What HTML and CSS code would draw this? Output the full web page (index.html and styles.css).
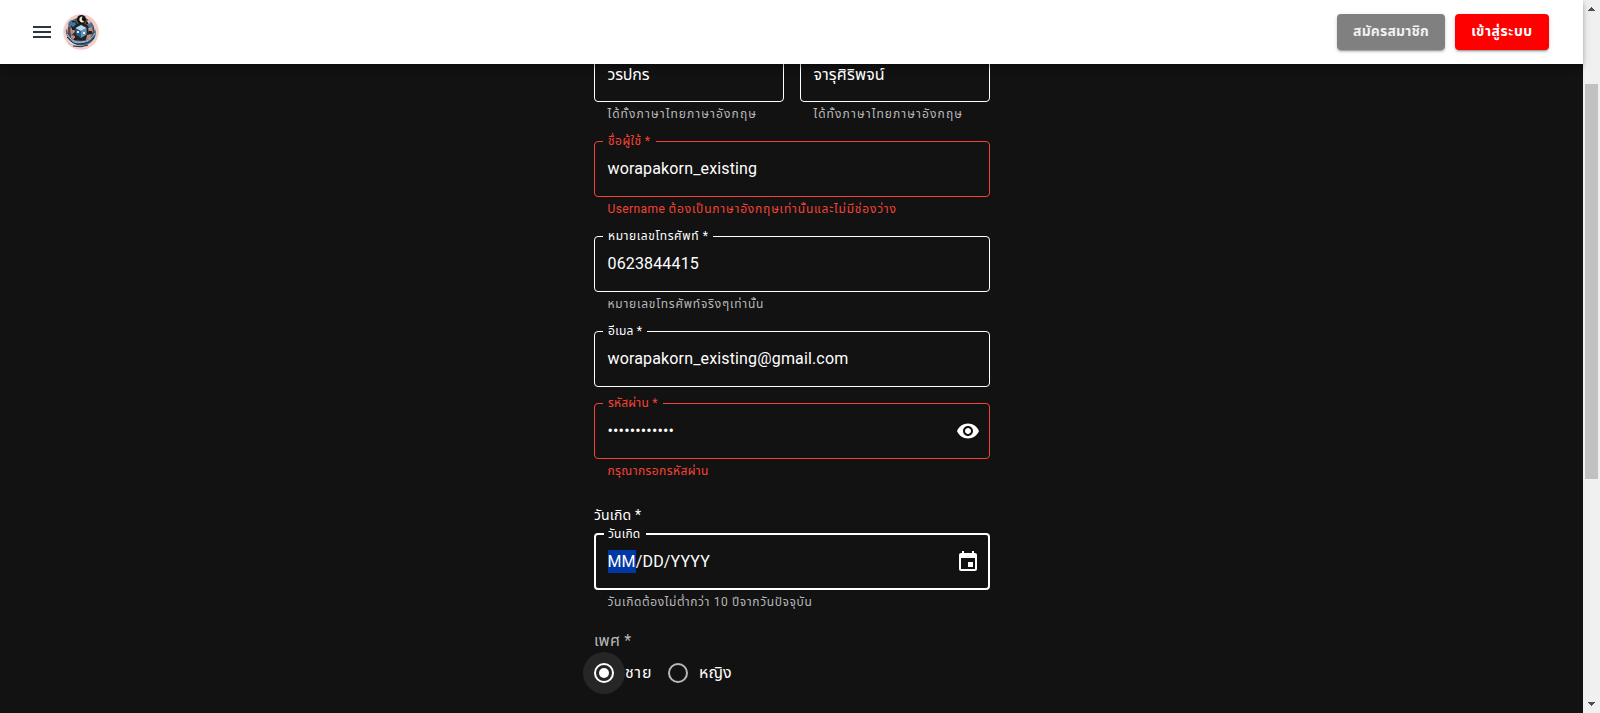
FILE: index.html
```html
<!DOCTYPE html>
<html lang="th">
<head>
<meta charset="utf-8">
<title>สมัครสมาชิก</title>
<link rel="stylesheet" href="styles.css">
</head>
<body>
<div class="page">
  <div class="view">
    <header class="appbar">
      <div class="brand">
        <svg class="menu" viewBox="0 0 24 24"><path d="M3 18h18v-2H3v2zm0-5h18v-2H3v2zm0-7v2h18V6H3z"/></svg>
        <svg class="logo" viewBox="0 0 36 36">
          <circle cx="18" cy="18" r="17.8" fill="#f3cdc8"/>
          <circle cx="18" cy="17" r="13.5" fill="#54474c"/>
          <path d="M5 10q2-5 7-4q5 2 2 6q-4 4-8 1zM22 8q6-2 8 3q1 4-3 4z" fill="#477594"/>
          <path d="M9 8a3 3 0 1 1-1 4" fill="none" stroke="#17232e" stroke-width="1.4"/>
          <path d="M3 14q-1 6 3 11q5 6 12 7q8 0 13-7q3-5 1-10q-2 7-7 10q-7 4-14 1q-6-3-8-12z" fill="#39627f"/>
          <path d="M4 20q5 9 14 8q9 0 14-9M6 26q6 4 12 3q7 0 11-4M5 29q8 5 20 2" fill="none" stroke="#a7c6d8" stroke-width="1"/>
          <path d="M4 23q6 8 13 7q8 0 14-6M10 32q8 2 15-1" fill="none" stroke="#192531" stroke-width="1"/>
          <path d="M10 14q3-5 8-5q6 0 9 6l-2 9q-6 5-14 0z" fill="#241f26"/>
          <path d="M7 15l4-2 1 5-4 3zM25 14l4-1 1 5-4 1zM8 21l4 1v4l-4-2zM24 21l5-1-2 5-4 1z" fill="#bd8b81"/>
          <path d="M9 13h3v3H9zM26 17h3v3h-3zM23 8h2v2h-2zM11 24h3v2h-3z" fill="#201d24"/>
          <circle cx="18.5" cy="5.500" r="4.500" fill="#11120f"/>
          <path d="M19.500 2.500a3 3 0 1 0 2 5q-4-.5-2-5z" fill="#f5ead3"/>
          <path d="M18 11l5.500 3v6.500l-5.500 3.500-5.500-3.500v-6.500z" fill="#285d86"/>
          <path d="M18 11l5.500 3-5.500 3-5.500-3z" fill="#bdd8e6"/>
          <path d="M18 17l5.500-3v6.500l-5.500 3.500z" fill="#6296b8"/>
          <path d="M14 17h2v2h-2zM20 18h2v2h-2z" fill="#e6f1f5"/>
          <path d="M24 7l2-2 2 3-2 2z" fill="#e9b8ae"/>
        </svg>
      </div>
      <div class="actions">
        <button class="btn btn-register"><span>สมัครสมาชิก</span></button>
        <button class="btn btn-login"><span>เข้าสู่ระบบ</span></button>
      </div>
    </header>
    <main class="form">
      <div class="row">
        <div class="item">
          <div class="field"><span class="value t-first">วรปกร</span></div>
          <p class="help t-help-name">ได้ทั้งภาษาไทยภาษาอังกฤษ</p>
        </div>
        <div class="item">
          <div class="field"><span class="value t-last">จารุศิริพจน์</span></div>
          <p class="help t-help-name">ได้ทั้งภาษาไทยภาษาอังกฤษ</p>
        </div>
      </div>
      <div class="item error">
        <div class="field"><label class="label l-user">ชื่อผู้ใช้ *</label><span class="value">worapakorn_existing</span></div>
        <p class="help">Username <span class="t-help-user">ต้องเป็นภาษาอังกฤษเท่านั้นและไม่มีช่องว่าง</span></p>
      </div>
      <div class="item">
        <div class="field"><label class="label l-phone">หมายเลขโทรศัพท์ *</label><span class="value">0623844415</span></div>
        <p class="help t-help-phone">หมายเลขโทรศัพท์จริงๆเท่านั้น</p>
      </div>
      <div class="item">
        <div class="field"><label class="label l-email">อีเมล *</label><span class="value">worapakorn_existing@gmail.com</span></div>
      </div>
      <div class="item error">
        <div class="field"><label class="label l-pass">รหัสผ่าน *</label><span class="value dots">••••••••••••</span>
          <svg class="icon" viewBox="0 0 24 24"><path d="M12 4.5C7 4.5 2.73 7.61 1 12c1.73 4.39 6 7.5 11 7.5s9.27-3.11 11-7.5c-1.73-4.39-6-7.5-11-7.5M12 17c-2.76 0-5-2.24-5-5s2.24-5 5-5 5 2.24 5 5-2.24 5-5 5m0-8c-1.66 0-3 1.34-3 3s1.34 3 3 3 3-1.34 3-3-1.34-3-3-3"/></svg>
        </div>
        <p class="help">กรุณากรอกรหัสผ่าน</p>
      </div>
      <div class="birth">
        <div class="caption"><span class="t-birth">วันเกิด *</span></div>
        <div class="field focused"><label class="label l-birth">วันเกิด</label><span class="value"><span class="sel">MM</span>/DD/YYYY</span>
          <svg class="icon" viewBox="0 0 24 24"><path d="M17 12h-5v5h5v-5zM16 1v2H8V1H6v2H5c-1.11 0-1.99.9-1.99 2L3 19c0 1.1.89 2 2 2h14c1.1 0 2-.9 2-2V5c0-1.1-.9-2-2-2h-1V1h-2zm3 18H5V8h14v11z"/></svg>
        </div>
        <p class="help t-help-birth">วันเกิดต้องไม่ต่ำกว่า 10 ปีจากวันปัจจุบัน</p>
      </div>
      <div class="gender">
        <div class="gender-label"><span class="t-gender">เพศ *</span></div>
        <div class="radios">
          <span class="radio on"><svg viewBox="0 0 24 24"><circle cx="12" cy="12" r="9" /><circle class="dot" cx="12" cy="12" r="5"/></svg></span><span class="rtext t-male">ชาย</span>
          <span class="radio"><svg viewBox="0 0 24 24"><circle cx="12" cy="12" r="9"/></svg></span><span class="rtext t-female">หญิง</span>
        </div>
      </div>
    </main>
  </div>
  <aside class="scroll">
    <svg class="arrow" viewBox="0 0 7 4" shape-rendering="crispEdges"><path d="M3 0h1v1h1v1h1v1h1v1H0V3h1V2h1V1h1z"/></svg>
    <div class="thumb"></div>
    <svg class="arrow" viewBox="0 0 7 4" shape-rendering="crispEdges"><path d="M0 0h7v1H6v1H5v1H4v1H3V3H2V2H1V1H0z"/></svg>
  </aside>
</div>
</body>
</html>
```
FILE: styles.css
```css
* { box-sizing: border-box; }
body { margin: 0; background: #121212; color: #fff; font-family: Roboto, "Noto Sans Thai", "Noto Sans", sans-serif; overflow: hidden; }
p { margin: 0; }
.page { display: flex; height: 713px; overflow: hidden; }
.view { flex: 1; min-width: 0; }
.appbar { height: 64px; padding: 0 34px 0 29px; background: #fff; display: flex; align-items: center; justify-content: space-between; position: relative; z-index: 5; box-shadow: 0 2px 4px -1px rgba(0,0,0,.2), 0 4px 5px rgba(0,0,0,.14), 0 1px 10px rgba(0,0,0,.12); }
.brand { display: flex; align-items: center; gap: 10px; }
.menu { width: 24px; height: 24px; fill: #2e3440; margin-left: 1px; }
.logo { width: 36px; height: 36px; margin-left: -1px; }
.actions { display: flex; gap: 10px; }
.btn { height: 36px; border: 0; border-radius: 4px; padding: 0 0 2px; color: #fff; font: 700 14px/24px Roboto, "Noto Sans Thai", "Noto Sans", sans-serif; white-space: nowrap; box-shadow: 0 3px 1px -2px rgba(0,0,0,.2), 0 2px 2px rgba(0,0,0,.14), 0 1px 5px rgba(0,0,0,.12); }
.btn-register { width: 108px; background: #808080; color: #f0f0f0; letter-spacing: .15px; }
.btn-login { width: 94px; background: #f00; color: #fff; letter-spacing: .55px; }
.form { width: 396px; margin: -18px 0 0 594px; display: flex; flex-direction: column; gap: 16px; }
.row { display: grid; grid-template-columns: 1fr 1fr; gap: 16px; }
.field { position: relative; height: 56px; border: 1px solid #fff; border-radius: 4px; display: flex; align-items: center; justify-content: space-between; padding: 0 8px 0 12.5px; }
.focused { border-width: 2px; padding: 0 7px 0 11.5px; height: 57px; }
.value { font-size: 16px; line-height: 23px; white-space: nowrap; letter-spacing: .15px; margin-bottom: 2px; }
.focused .value { margin-bottom: 0; }
.label { position: absolute; left: 8px; top: -11px; height: 20px; padding-left: 5px; background: #121212; font-size: 12px; line-height: 20px; white-space: nowrap; }
.focused .label { padding-left: 4px; top: -11px; }
.help { height: 20px; margin: 2px 0 1px 13.5px; font-size: 12px; line-height: 20px; color: #b8b8b8; white-space: nowrap; letter-spacing: .4px; }
.error .field { border-color: #f44336; }
.error .label, .error .help { color: #f44336; }
.icon { width: 24px; height: 24px; fill: #fff; margin-right: 1px; }
.sel { background: #0039a6; display: inline-block; }
.l-user { width: 53px; letter-spacing: .45px; }
.l-phone { width: 110px; letter-spacing: .6px; }
.l-email { width: 44px; letter-spacing: .25px; }
.l-pass { width: 60px; letter-spacing: .2px; }
.l-birth { width: 42px; letter-spacing: .2px; }
.t-first { letter-spacing: -.2px; margin-bottom: 0; }
.t-last { letter-spacing: .15px; margin-bottom: 0; }
.t-help-name { letter-spacing: 1.1px; }
.t-help-user { letter-spacing: .8px; }
.t-help-phone { letter-spacing: .78px; }
.t-help-birth { letter-spacing: .62px; }
.birth { padding-top: 7px; }
.caption { height: 28px; font-size: 14px; line-height: 20px; }
.t-birth { letter-spacing: .15px; }
.gender { padding-top: 1px; }
.gender-label { height: 22px; font-size: 16px; line-height: 22px; color: #b8b8b8; }
.t-gender { letter-spacing: .2px; }
.radios { display: flex; align-items: center; height: 42px; margin-left: -11px; }
.radio { width: 42px; height: 42px; border-radius: 50%; display: flex; align-items: center; justify-content: center; }
.radio svg { width: 24px; height: 24px; fill: none; stroke: #b8b8b8; stroke-width: 2; }
.radio.on { background: #262626; }
.radio.on svg { stroke: #fff; }
.radio .dot { fill: #fff; stroke: none; }
.rtext { font-size: 16px; }
.t-male { width: 32px; letter-spacing: .8px; }
.scroll { width: 17px; background: #f0f0f0; display: flex; flex-direction: column; align-items: center; padding: 7px 0; }
.arrow { width: 7px; height: 4px; fill: #505050; }
.thumb { width: 13px; height: 395px; margin: 73px 0 auto; background: #c1c1c1; }
```
